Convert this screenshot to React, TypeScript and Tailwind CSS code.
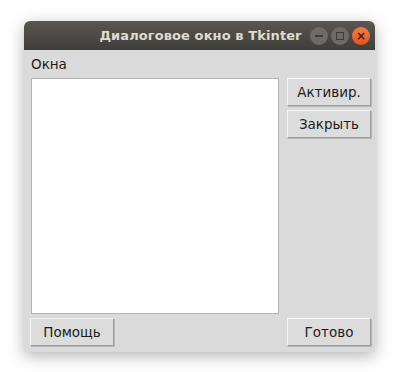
import React from "react";

const Btn = ({ label, className = "" }: { label: string; className?: string }) => (
  <button
    className={
      "h-[28px] w-[84px] bg-[#dcdcdc] border border-t-[#f4f4f4] border-l-[#f4f4f4] border-b-[#9c9c9c] border-r-[#9c9c9c] shadow-[1px_1px_0_#b8b8b8] text-[13.5px] text-[#1c1c1c] flex items-center justify-center " +
      className
    }
  >
    {label}
  </button>
);

const App = () => {
  return (
    <div
      className="w-[397px] h-[372px] bg-white pt-[21px] pl-[24px]"
      style={{ fontFamily: '"DejaVu Sans", "Liberation Sans", sans-serif' }}
    >
      <div className="w-[351px] h-[331px] flex flex-col rounded-t-[6px] shadow-[0_4px_16px_rgba(0,0,0,0.3)]">
        {/* title bar */}
        <div className="h-[29px] rounded-t-[6px] bg-gradient-to-b from-[#5a5752] to-[#403e3a] grid grid-cols-[1fr_auto_1fr] items-center">
          <div />
          <div className="text-[13px] font-bold text-[#dfdbd2] tracking-[0.1px] pl-[2px]">
            Диалоговое окно в Tkinter
          </div>
          <div className="flex justify-end items-center gap-[3px] pr-[5px]">
            <div className="w-[18px] h-[18px] rounded-full bg-[#6d6b67] flex items-center justify-center">
              <div className="w-[8px] h-[2px] bg-[#3e3c39]" />
            </div>
            <div className="w-[18px] h-[18px] rounded-full bg-[#6d6b67] flex items-center justify-center">
              <div className="w-[8px] h-[8px] border border-[#3e3c39]" />
            </div>
            <div className="w-[18px] h-[18px] rounded-full bg-gradient-to-b from-[#f37a48] to-[#e35420] flex items-center justify-center text-[#4a1a08] text-[12px] font-bold leading-none">
              ×
            </div>
          </div>
        </div>

        {/* body */}
        <div className="flex-1 bg-[#dadada] flex flex-col pl-[6px] pr-[4px]">
          <div className="h-[28px] flex items-center pl-[1px] text-[13.5px] text-[#1c1c1c]">Окна</div>
          <div className="flex justify-between">
            <div className="ml-[1px] w-[248px] h-[236px] bg-white border border-[#b4b4b4]" />
            <div className="flex flex-col gap-[4px]">
              <Btn label="Активир." className="h-[27px]" />
              <Btn label="Закрыть" className="h-[27px]" />
            </div>
          </div>
          <div className="flex justify-between mt-[4px]">
            <Btn label="Помощь" className="w-[83px]" />
            <Btn label="Готово" />
          </div>
        </div>
      </div>
    </div>
  );
};

export default App;
